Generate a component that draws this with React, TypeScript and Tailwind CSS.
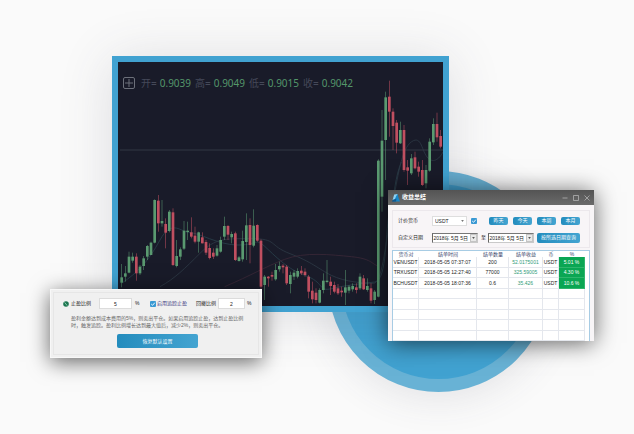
import type { ReactNode } from "react";

const cjk = "font-['Liberation_Sans','Noto_Sans_CJK_SC',sans-serif]";

// Each candle: [high, open/close top, open/close bottom, low, rising]
type Candle = [number, number, number, number, 0 | 1];

const rangePhase: Candle[] = [
  [312, 352, 368, 382, 1], [318, 340, 350, 365, 1], [275, 290, 338, 340, 1], [278, 290, 302, 308, 1],
  [280, 290, 340, 362, 0], [315, 320, 340, 345, 1], [288, 295, 318, 330, 1], [255, 258, 290, 300, 1],
  [245, 248, 285, 285, 1], [118, 120, 248, 250, 1], [105, 122, 190, 215, 0], [120, 183, 190, 200, 1],
  [175, 192, 218, 265, 0], [150, 155, 213, 217, 1], [145, 157, 315, 318, 0], [240, 288, 318, 322, 1],
  [262, 268, 290, 300, 1], [183, 212, 266, 270, 1], [185, 212, 216, 240, 1], [172, 217, 230, 235, 0],
  [200, 227, 245, 250, 0], [215, 217, 245, 278, 1], [217, 232, 250, 250, 0], [240, 246, 278, 285, 0],
  [250, 264, 294, 298, 0], [265, 278, 290, 297, 0], [255, 265, 287, 290, 1], [230, 240, 275, 278, 1],
  [170, 198, 230, 240, 1], [195, 198, 224, 240, 0], [215, 222, 232, 250, 1], [215, 220, 300, 303, 0],
  [288, 292, 303, 305, 1], [212, 243, 298, 305, 1], [160, 196, 246, 300, 1], [175, 195, 255, 310, 0],
  [148, 197, 257, 262, 1], [193, 195, 242, 245, 0], [238, 242, 380, 405, 0], [345, 350, 375, 420, 1],
  [348, 350, 355, 380, 0], [335, 345, 350, 362, 0], [312, 330, 358, 362, 1], [305, 318, 328, 335, 1],
  [312, 317, 322, 340, 0], [315, 320, 370, 375, 0], [335, 345, 372, 400, 1], [330, 338, 350, 360, 1],
  [325, 333, 350, 355, 1], [318, 332, 340, 345, 0], [325, 335, 345, 350, 0], [345, 350, 395, 415, 0],
  [365, 392, 418, 430, 0], [385, 398, 420, 430, 0], [385, 390, 428, 430, 1], [340, 362, 390, 400, 1],
  [300, 362, 366, 370, 1], [350, 365, 378, 405, 0], [365, 375, 395, 400, 0], [372, 385, 400, 405, 0],
  [380, 392, 397, 410, 0], [330, 382, 398, 435, 1], [375, 380, 392, 400, 1], [370, 378, 388, 395, 1],
  [370, 382, 390, 400, 0], [340, 350, 385, 390, 1], [345, 355, 388, 390, 0], [355, 378, 390, 395, 1],
  [370, 385, 422, 430, 0], [390, 395, 420, 432, 1],
];

const breakoutPhase: Candle[] = [
  [328, 332, 740, 742, 1], [180, 272, 440, 485, 1], [125, 142, 270, 390, 1], [92, 140, 185, 260, 0],
  [175, 185, 228, 300, 0], [210, 218, 278, 310, 0], [215, 240, 280, 282, 1], [225, 240, 360, 365, 0],
  [330, 352, 362, 405, 0], [312, 325, 370, 375, 1], [305, 322, 355, 358, 0], [335, 350, 365, 380, 0],
  [330, 360, 405, 408, 0], [345, 360, 400, 415, 1], [265, 275, 362, 365, 1], [205, 222, 277, 285, 1],
  [188, 222, 262, 275, 0], [240, 258, 290, 295, 0], [280, 288, 310, 322, 0],
];

function Candles({ data, start, offset }: { data: Candle[]; start: number; offset: number }) {
  return (
    <>
      {data.map(([high, top, bottom, low, up], i) => {
        const x = 11 * (start + i + 1);
        const fill = up ? "#5a9a70" : "#c04f60";
        return (
          <g key={i} fill={fill}>
            <rect x={x - 1} y={high + offset} width={2} height={low - high} opacity={0.8} />
            <rect x={x - 4} y={top + offset} width={8} height={Math.max(bottom - top, 3)} />
          </g>
        );
      })}
    </>
  );
}

const quotes = [
  ["开=", "0.9039"],
  ["高=", "0.9049"],
  ["低=", "0.9015"],
  ["收=", "0.9042"],
];

function ChartPanel() {
  return (
    <section className="absolute left-[112px] top-[56px] h-[256px] w-[337px] border-6 border-[#41a2d1] bg-[#191b29] shadow-[0_4px_50px_rgba(70,70,90,0.16)]">
      <div className="grid h-full">
        <svg viewBox="0 0 975 732" className="col-start-1 row-start-1 h-full w-full" preserveAspectRatio="none" aria-hidden="true">
          <path d="M6 264H975" stroke="#323844" strokeWidth="3" />
          <g fill="none" strokeWidth="2.5">
            <path d="M11 664C60 630 90 600 126 534S190 512 216 512S300 548 356 549S410 532 430 545S500 620 560 640S600 690 640 680S730 665 770 660S800 500 816 444S830 350 850 300" stroke="#29404a" />
            <path d="M126 674C170 650 200 620 246 574S320 530 400 530S450 550 516 575S600 620 640 640S740 664 766 664S800 560 820 450S850 260 881 239S910 270 931 289S970 280 975 270" stroke="#2c3945" />
            <path d="M320 674C400 640 440 615 500 592S640 578 700 584S760 605 780 612" stroke="#3a2837" />
          </g>
          <Candles data={rangePhase} start={0} offset={294} />
          <Candles data={breakoutPhase} start={70} offset={-36} />
        </svg>
        <div className="col-start-1 row-start-1 mt-[14px] flex h-[14px] items-center self-start pl-[5px] font-['Noto_Sans','Noto_Sans_CJK_SC',sans-serif] text-[10px] leading-[14px]">
          <svg viewBox="0 0 12 12" className="mr-[6px] size-3" fill="none" stroke="#6c707a" aria-hidden="true">
            <rect x="0.5" y="0.5" width="11" height="11" rx="1.5" />
            <path d="M6 2V10M2 6H10" />
          </svg>
          <dl className="flex">
            {quotes.map(([label, value]) => (
              <div key={label} className="flex w-[54px] gap-[3px]">
                <dt className="text-[#454959]">{label}</dt>
                <dd className="text-[#549669]">{value}</dd>
              </div>
            ))}
          </dl>
        </div>
      </div>
    </section>
  );
}

function Tick({ label, id, children }: { label?: string; id: string; children?: ReactNode }) {
  return (
    <label htmlFor={id} className="flex items-center gap-px">
      <span className="grid size-[6px] place-items-center">
        <input id={id} type="checkbox" defaultChecked aria-label={label} className="col-start-1 row-start-1 size-[6px] appearance-none rounded-[1px] bg-[#3a99d3]" />
        <svg viewBox="0 0 6 6" className="pointer-events-none col-start-1 row-start-1 size-[6px]" fill="none" stroke="white" aria-hidden="true">
          <path d="M1.2 3L2.6 4.3L4.8 1.7" strokeWidth="0.9" />
        </svg>
      </span>
      {children}
    </label>
  );
}

const blueButton = "rounded-[2px] bg-linear-to-r from-[#238cbd] to-[#43a4d1] text-white";

function DateField({ label }: { label: string }) {
  return (
    <div className="flex h-[10px] w-[46px] items-center border border-[#c9c9c9] border-l-[#666] border-t-[#777] bg-white">
      <input aria-label={label} defaultValue="2018年 5月 5日" className="h-full w-full min-w-0 flex-1 text-[#222]" />
      <button aria-label={`选择${label}`} className="grid h-full w-[7px] place-items-center border border-[#c4c4c4] bg-[#e9e9e9]">
        <svg viewBox="0 0 4 3" className="h-[2px] w-[3px]" fill="#555" aria-hidden="true">
          <path d="M0 0H4L2 3Z" />
        </svg>
      </button>
    </div>
  );
}

const columns = ["货币对", "结单时间", "结单数量", "结单收益", "币", "%"];
const orders = [
  ["VENUSDT", "2018-05-05 07:37:07", "200", "52.0175001", "USDT", "5.01 %"],
  ["TRXUSDT", "2018-05-05 12:27:40", "77000", "325.59005", "USDT", "4.30 %"],
  ["BCHUSDT", "2018-05-05 18:07:36", "0.6", "35.426", "USDT", "10.6 %"],
  [], [], [], [], [],
];

function cellStyle(column: number, filled: boolean) {
  if (column === 5 && filled) return "bg-[#0aa653] border-[#2fb56d] text-white";
  if (column === 3) return "border-[#e4e7ed] text-[#2f9c78]";
  return "border-[#e4e7ed] text-[#222]";
}

function SummaryWindow() {
  return (
    <section className={`absolute left-[388px] top-[190px] w-[206px] bg-[#f8f5f7] text-[5px] leading-[7px] text-[#222] shadow-[0_2px_22px_rgba(0,0,0,0.62)] ${cjk}`}>
      <header className="flex h-[15px] items-center bg-linear-to-b from-[#545454] to-[#6a6a6a] px-1 text-white">
        <svg viewBox="0 0 8 8" className="size-2" aria-hidden="true">
          <path d="M2.2 0.4L5.6 0L4.8 5.2L0.6 6Z" fill="#8bd0f2" />
          <path d="M4 2.6L5.6 0L6.6 4L8 7.6H2Z" fill="#1787c9" />
          <path d="M0.6 6L4.4 4.6L4 7.6L0 7.8Z" fill="#0f5b94" />
        </svg>
        <h2 className="ml-[2px] flex-1 text-[6px] font-bold">收益总结</h2>
        <div className="flex gap-[5px]">
          {[["最小化", "M0.5 3H5.5"], ["最大化", "M0.5 0.5H5.5V5.5H0.5Z"], ["关闭", "M0.5 0.5L5.5 5.5M5.5 0.5L0.5 5.5"]].map(([name, d]) => (
            <button key={name} aria-label={name}>
              <svg viewBox="0 0 6 6" className="size-[6px]" fill="none" stroke="#bdbdbd" strokeWidth="0.7">
                <path d={d} />
              </svg>
            </button>
          ))}
        </div>
      </header>

      <div className="px-1 pt-[5px]">
        <form className="flex h-[38px] flex-col justify-center gap-[7px] border border-[#ece8ec] pl-[5px] pr-[9px]" onSubmit={(e) => e.preventDefault()}>
          <div className="flex h-[10px] items-center">
            <label htmlFor="quote" className="w-[34px]">计价货币</label>
            <div className="grid h-[10px] w-[35px] items-center border border-[#dedede] bg-white">
              <select id="quote" className="col-start-1 row-start-1 h-[8px] w-full appearance-none pl-[2px] leading-[8px]">
                <option>USDT</option>
              </select>
              <svg viewBox="0 0 4 3" className="pointer-events-none col-start-1 row-start-1 mr-[2px] h-[2px] w-[3px] justify-self-end" fill="#777" aria-hidden="true">
                <path d="M0 0H4L2 3Z" />
              </svg>
            </div>
            <div className="ml-[4px]"><Tick id="quote-on" label="启用计价货币" /></div>
            <div className="flex flex-1 justify-end gap-[5px]">
              {["昨天", "今天", "本周", "本月"].map((name) => (
                <button key={name} className={`h-2 w-[19px] ${blueButton}`}>{name}</button>
              ))}
            </div>
          </div>
          <div className="flex h-[10px] items-center justify-between">
            <span className="w-[32px]">自定义日期</span>
            <DateField label="开始日期" />
            <span>至</span>
            <DateField label="结束日期" />
            <button className={`h-[10px] w-[43px] ${blueButton}`}>按所选日期查询</button>
          </div>
        </form>
      </div>

      <div className="px-1 pt-[2px]">
        <table className="w-full table-fixed border-separate border-spacing-0 border-x border-t border-[#a7cce4] bg-white text-center leading-[5px]">
          <colgroup>
            <col className="w-[26px]" />
            <col className="w-[58px]" />
            <col className="w-[32px]" />
            <col className="w-[34px]" />
            <col className="w-[16px]" />
            <col className="w-[26px]" />
            <col />
          </colgroup>
          <thead>
            <tr className="h-[6px] text-[#39456b]">
              {columns.map((name) => (
                <th key={name} className="p-0 font-normal">{name}</th>
              ))}
              <td className="p-0" />
            </tr>
          </thead>
          <tbody>
            {orders.map((order, row) => (
              <tr key={row} className="odd:h-[11px] even:h-[10px]">
                {columns.map((name, column) => (
                  <td key={name} className={`whitespace-nowrap border-b border-r p-0 ${cellStyle(column, order.length > 0)}`}>
                    {order[column]}
                  </td>
                ))}
                <td className="p-0" />
              </tr>
            ))}
          </tbody>
        </table>
      </div>
    </section>
  );
}

function StopProfitPanel() {
  const field = "h-[11px] border border-[#dcdcdc] bg-white text-center";
  return (
    <section className={`absolute left-[50px] top-[289px] w-[212px] border border-[#f8f8f8] bg-[#f0f0f0] p-[2px] text-[5px] leading-[7px] text-[#222] shadow-[0_4px_20px_rgba(0,0,0,0.6)] ${cjk}`}>
      <form className="flex h-[63px] flex-col border border-[#e6e6e6] pt-[5px]" onSubmit={(e) => e.preventDefault()}>
        <div className="flex h-[11px] items-center pl-[9px]">
          <svg viewBox="0 0 6 6" className="mr-[2px] size-[6px] shrink-0" aria-hidden="true">
            <circle cx="3" cy="3" r="2.8" fill="#1c7550" />
            <path d="M1.6 1.4L4.2 4.6" stroke="#a5dfc0" strokeWidth="0.8" />
          </svg>
          <label htmlFor="profit" className="w-[28px] shrink-0">止盈比例</label>
          <input id="profit" defaultValue="5" className={`w-[33px] shrink-0 ${field}`} />
          <span className="ml-[3px] w-[15px] shrink-0">%</span>
          <div className="w-[46px] shrink-0 text-[#3d3a80]"><Tick id="trailing">启用追踪止盈</Tick></div>
          <label htmlFor="drawdown" className="w-[22px] shrink-0">回撤比例</label>
          <input id="drawdown" defaultValue="2" className={`w-[27px] shrink-0 ${field}`} />
          <span className="ml-[2px]">%</span>
        </div>
        <p className="ml-[17px] mt-[6px] text-[#666]">
          盈利金额达到成本费用的5%，则卖出平仓。如果启用追踪止盈，达到止盈比例
          <br />
          时，触发追踪。盈利比例增长达到最大值后，减少2%，则卖出平仓。
        </p>
        <button className={`ml-[63px] mt-[5px] h-[14px] w-[81px] shrink-0 ${blueButton}`}>恢复默认设置</button>
      </form>
    </section>
  );
}

export default function App() {
  return (
    <main className="relative min-h-screen overflow-hidden bg-[#fafafa]">
      <div className="absolute left-[328px] top-[171px] size-[221px] rounded-full border-[13px] border-[#68b2d5] bg-[#41a2d1] shadow-[0_4px_40px_rgba(70,70,90,0.14)]" />
      <ChartPanel />
      <SummaryWindow />
      <StopProfitPanel />
    </main>
  );
}
